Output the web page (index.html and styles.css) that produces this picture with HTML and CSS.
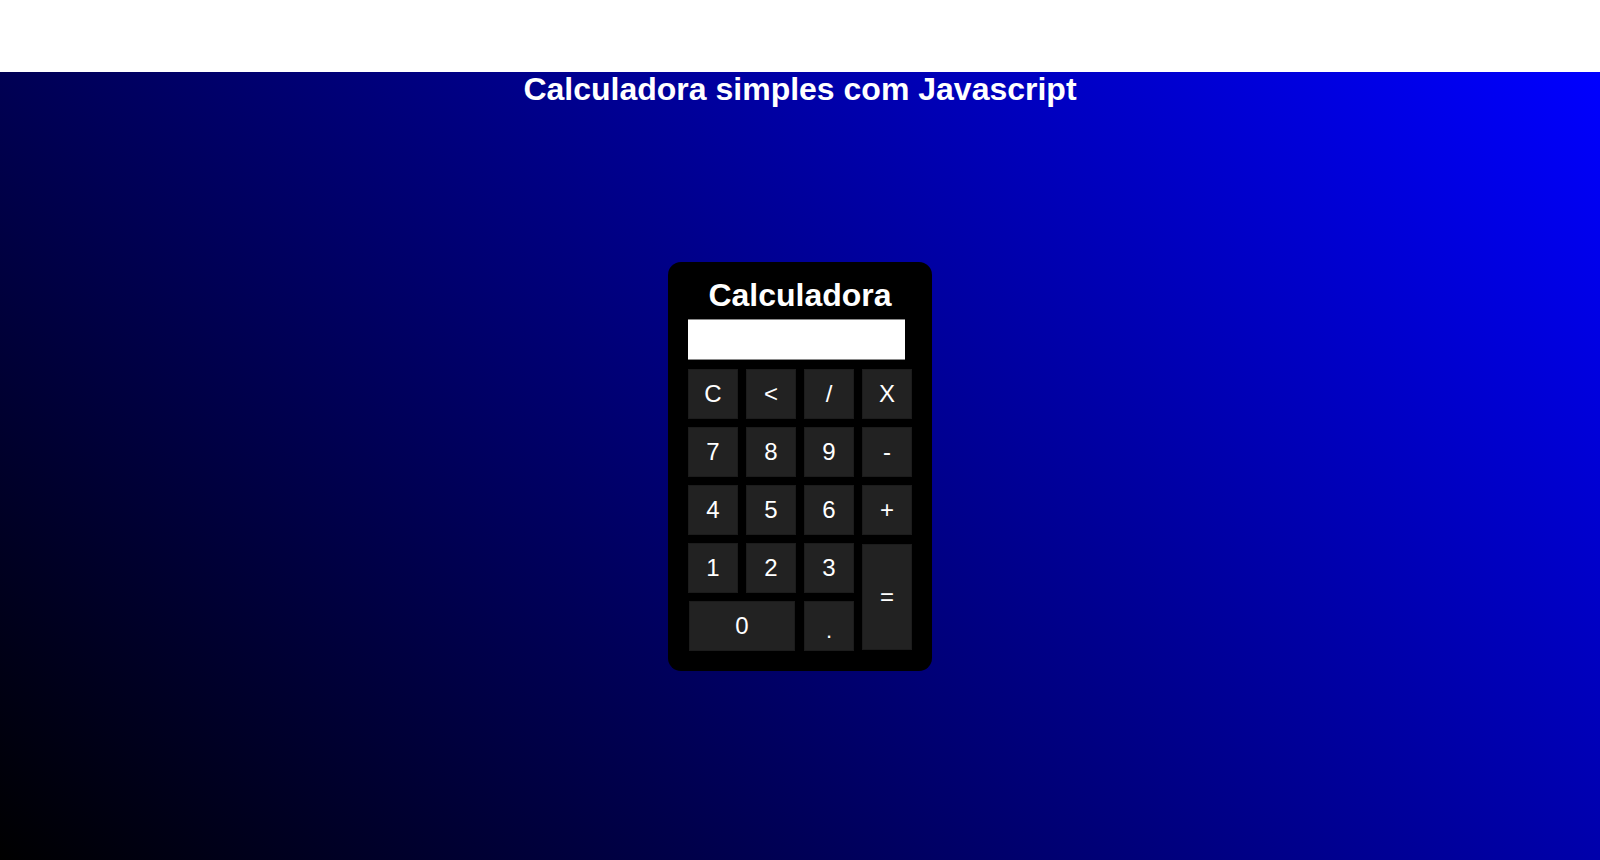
FILE: index.html
```html
<!DOCTYPE html>
<html lang="pt">
<head>
<meta charset="utf-8">
<title>Calculadora simples com Javascript</title>
<link rel="stylesheet" href="styles.css">
</head>
<body>
<header class="topbar"></header>
<section class="stage">
  <h1 class="page-title">Calculadora simples com Javascript</h1>
  <div class="center">
    <div class="calc">
      <h2 class="calc-title">Calculadora</h2>
      <input class="display" type="text" readonly>
      <div class="keys">
        <button class="key">C</button>
        <button class="key">&lt;</button>
        <button class="key">/</button>
        <button class="key">X</button>
        <button class="key">7</button>
        <button class="key">8</button>
        <button class="key">9</button>
        <button class="key">-</button>
        <button class="key">4</button>
        <button class="key">5</button>
        <button class="key">6</button>
        <button class="key">+</button>
        <button class="key">1</button>
        <button class="key">2</button>
        <button class="key">3</button>
        <button class="key key-equals">=</button>
        <button class="key key-zero">0</button>
        <button class="key key-dot">.</button>
      </div>
    </div>
  </div>
</section>
</body>
</html>
```

FILE: styles.css
```css
* { box-sizing: border-box; }

html, body {
  margin: 0;
  padding: 0;
  background: #ffffff;
  font-family: "Liberation Sans", Arial, sans-serif;
}

.topbar {
  height: 72px;
  background: #ffffff;
}

.stage {
  height: 788px;
  background: linear-gradient(45deg, #000000, #0000ff);
  display: grid;
  grid-template-rows: auto 1fr;
  padding-bottom: 34px;
}

.page-title {
  margin: 0;
  color: #ffffff;
  font-size: 32px;
  font-weight: bold;
  line-height: 34px;
  text-align: center;
}

.center {
  display: flex;
  align-items: center;
  justify-content: center;
}

.calc {
  width: 264px;
  background: #000000;
  border-radius: 13px;
  padding: 15px 20px 20px;
  display: flex;
  flex-direction: column;
  align-items: flex-start;
}

.calc-title {
  margin: 0;
  width: 100%;
  color: #ffffff;
  font-size: 32px;
  font-weight: bold;
  line-height: 36px;
  text-align: center;
}

.display {
  width: 217px;
  height: 41px;
  margin: 6px 0 0;
  padding: 0 4px;
  border: none;
  border-top: 1px solid #8a8a8a;
  border-bottom: 1px solid #8a8a8a;
  background: #ffffff;
  font-family: "Liberation Sans", Arial, sans-serif;
  font-size: 24px;
  outline: none;
}

.keys {
  margin-top: 9px;
  display: grid;
  grid-template-columns: repeat(4, 50px);
  grid-auto-rows: 50px;
  gap: 8px;
}

.key {
  margin: 0;
  padding: 0;
  border: 1px solid #1c1c1c;
  background: #222222;
  color: #ffffff;
  font-family: "Liberation Sans", Arial, sans-serif;
  font-size: 24px;
  line-height: 1;
  cursor: pointer;
}

.key-equals {
  grid-column: 4;
  grid-row: 4 / span 2;
  margin: 1px 0;
}

.key-zero {
  grid-column: 1 / span 2;
  grid-row: 5;
  margin: 0 1px;
}

.key-dot {
  grid-column: 3;
  grid-row: 5;
  padding-top: 10px;
  font-size: 22px;
}
```
